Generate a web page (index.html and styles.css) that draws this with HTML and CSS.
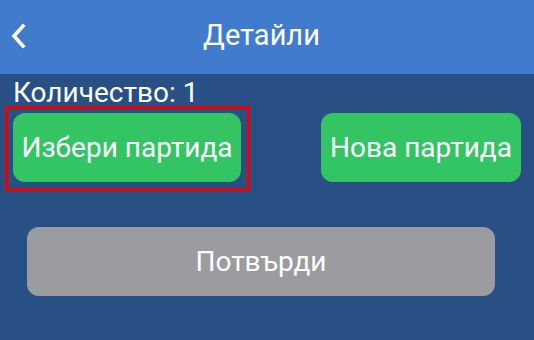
FILE: index.html
```html
<!DOCTYPE html>
<html lang="bg">
<head>
    <meta charset="UTF-8">
    <meta name="viewport" content="width=device-width, initial-scale=1.0">
    <title>Детайли</title>
    <link rel="stylesheet" href="styles.css">
</head>
<body>
    <div class="header">
        <span class="back">
            <svg width="16" height="26" viewBox="0 0 16 26"><path d="M13 3 L4 13 L13 23" fill="none" stroke="#fff" stroke-width="3.6" stroke-linecap="square"/></svg>
        </span>
        <h1>Детайли</h1>
    </div>

    <div class="content">
        <div class="qty">Количество: 1</div>
        <div class="btn-row">
            <span class="selected">
                <button class="btn btn-green btn-pick">Избери партида</button>
            </span>
            <button class="btn btn-green btn-new">Нова партида</button>
        </div>
        <button class="btn btn-confirm">Потвърди</button>
    </div>
</body>
</html>
```

FILE: styles.css
```css
* {
    margin: 0;
    padding: 0;
    box-sizing: border-box;
}

body {
    font-family: Roboto, 'Noto Sans', sans-serif;
    background-color: #285084;
    width: 534px;
    height: 340px;
    overflow: hidden;
}

.header {
    height: 74px;
    background: #407bcd;
    display: flex;
    align-items: center;
    padding-left: 10px;
}

.back {
    display: flex;
    width: 24px;
    margin-top: -2px;
}

.header h1 {
    flex: 1;
    text-align: center;
    color: #fff;
    font-weight: normal;
    font-size: 29px;
    margin-right: 45px;
    margin-top: -4px;
}

.content {
    padding: 0 13px;
}

.qty {
    color: #fff;
    font-size: 28px;
    line-height: 30px;
    margin-top: 4px;
}

.btn-row {
    display: flex;
    justify-content: space-between;
    align-items: flex-start;
    margin: -2px 0 0 -8px;
}

.selected {
    display: block;
    border: 3px solid #f20000;
    padding: 4px 6px 6px 5px;
}

.btn {
    display: block;
    border: none;
    border-radius: 12px;
    color: #fff;
    font-family: inherit;
    font-size: 28px;
    height: 69px;
    cursor: pointer;
}

.btn-green {
    background: #33c463;
    padding: 0 8px;
}

.btn-pick {
    width: 228px;
}

.btn-new {
    width: 200px;
    margin-top: 7px;
}

.btn-confirm {
    background: #9a9ca0;
    width: 468px;
    margin: 36px 0 0 14px;
}
```
